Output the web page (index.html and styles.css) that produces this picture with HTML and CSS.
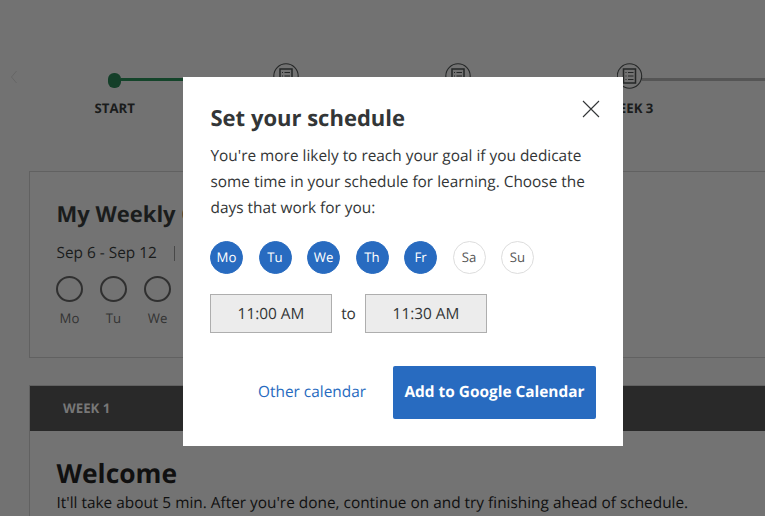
FILE: index.html
```html
<!DOCTYPE html>
<html lang="en">
<head>
<meta charset="utf-8">
<title>Set your schedule</title>
<link rel="stylesheet" href="styles.css">
</head>
<body>
<main class="page">
  <section class="timeline">
    <svg class="prev" width="8" height="14" viewBox="0 0 8 14"><path d="M6.500 1 1.500 7l5 6"/></svg>
    <ol class="weeks">
      <li class="week start"><div class="track"><span class="dot"></span></div><span class="name">START</span></li>
      <li class="week"><div class="track"><svg class="badge" width="26" height="26" viewBox="0 0 26 26"><circle cx="13" cy="13" r="12.200"/><path class="sheet" d="M7 6h12v14H7z"/><path d="M11.500 9.500h5.500M11.500 13h5.500M11.500 16.500h5.500M9 9.500h1M9 13h1M9 16.500h1"/></svg></div></li>
      <li class="week"><div class="track"><svg class="badge" width="26" height="26" viewBox="0 0 26 26"><circle cx="13" cy="13" r="12.200"/><path class="sheet" d="M7 6h12v14H7z"/><path d="M11.500 9.500h5.500M11.500 13h5.500M11.500 16.500h5.500M9 9.500h1M9 13h1M9 16.500h1"/></svg></div></li>
      <li class="week"><div class="track"><svg class="badge" width="26" height="26" viewBox="0 0 26 26"><circle cx="12.500" cy="13" r="12.200"/><path class="sheet" d="M6.500 6h12v14h-12z"/><path d="M11 9.500h5.500M11 13h5.500M11 16.500h5.500M8.500 9.500h1M8.500 13h1M8.500 16.500h1"/></svg></div><span class="name">WEEK 3</span></li>
    </ol>
  </section>
  <section class="card goal">
    <h2>My Weekly Goal</h2>
    <p class="dates"><span>Sep 6 - Sep 12</span><span class="bar"></span></p>
    <div class="progress">
      <div class="day"><span class="ring"></span>Mo</div>
      <div class="day"><span class="ring"></span>Tu</div>
      <div class="day"><span class="ring"></span>We</div>
    </div>
  </section>
  <section class="card module">
    <header>WEEK 1</header>
    <h1>Welcome</h1>
    <p>It'll take about 5 min. After you're done, continue on and try finishing ahead of schedule.</p>
  </section>
</main>
<div class="modal" role="dialog">
  <div class="title-row">
    <h2>Set your schedule</h2>
    <svg class="close" width="18" height="18" viewBox="0 0 18 18"><path d="M1 1l16 16M17 1 1 17"/></svg>
  </div>
  <p class="copy">You're more likely to reach your goal if you dedicate<br>some time in your schedule for learning. Choose the<br>days that work for you:</p>
  <div class="days">
    <span class="pick on">Mo</span><span class="pick on">Tu</span><span class="pick on">We</span><span class="pick on">Th</span><span class="pick on">Fr</span><span class="pick">Sa</span><span class="pick">Su</span>
  </div>
  <div class="times"><span class="time">11:00 AM</span><span class="to">to</span><span class="time">11:30 AM</span></div>
  <div class="actions"><a class="other">Other calendar</a><span class="add">Add to Google Calendar</span></div>
</div>
</body>
</html>
```
FILE: styles.css
```css
* { box-sizing: border-box; }
body {
  margin: 0;
  width: 765px;
  height: 516px;
  overflow: hidden;
  background: #727272;
  font-family: "Open Sans", "Noto Sans", sans-serif;
  font-size: 15.4px;
  color: #1a1c1c;
  text-rendering: geometricPrecision;
}
h1, h2, p, ol { margin: 0; padding: 0; }
.page { height: 516px; overflow: hidden; }

.timeline { display: flex; height: 171px; padding-top: 63px; }
.prev { flex: none; margin: 7px 10px 0 10px; fill: none; stroke: #666; }
.weeks { flex: none; display: grid; grid-template-columns: repeat(4, 171.5px); margin-left: 1px; list-style: none; }
.week { display: flex; flex-direction: column; align-items: center; width: 171.5px; }
.track { display: flex; justify-content: center; width: 100%; height: 34px; background: linear-gradient(#555, #555) 0 15px / 100% 3px no-repeat; }
.week:last-child { width: 230px; margin-right: -60px; align-items: flex-start; }
.week:last-child .track { background-position: 98px 15px; background-size: 140px 3px; justify-content: flex-start; padding-left: 73px; }
.week:last-child .name { width: 172.5px; text-align: center; }
.start .track { background: linear-gradient(#14442a, #14442a) 92px 15px / 80px 3px no-repeat; }
.dot { width: 13px; height: 15px; margin-top: 10px; border-radius: 6px; background: #143f29; }
.badge { fill: none; stroke: #252727; stroke-width: 1.1; }
.sheet { stroke-width: 1.5; }
.name { line-height: 22px; font-size: 13.2px; font-weight: 700; }

.card { margin-left: 29px; width: 900px; border: 1px solid #616161; background: #737373; }
.goal { height: 187px; padding: 26px 26.5px; }
.goal h2 { font-size: 22px; line-height: 32px; }
.dates { display: flex; align-items: center; gap: 17px; margin-top: 11px; line-height: 24px; }
.bar { width: 1px; height: 15px; background: #484848; }
.progress { display: flex; gap: 17px; margin-top: 11px; margin-left: -0.5px; }
.day { display: flex; flex-direction: column; align-items: center; width: 27px; font-size: 13.2px; line-height: 18px; color: #333; }
.ring { width: 27px; height: 26px; margin-bottom: 7px; border: 2px solid #303030; border-radius: 50%; }
.module { height: 200px; margin-top: 27px; }
.module header { height: 45px; padding-left: 33px; background: #292929; color: #777; font-size: 13.2px; font-weight: 700; line-height: 45px; }
.module h1 { margin: 24px 0 0 26.5px; font-size: 26.4px; line-height: 36px; color: #101010; }
.module p { margin: 0 0 0 26.5px; line-height: 24px; color: #101010; }

.modal { position: absolute; left: 183px; top: 77px; width: 440px; height: 369px; padding: 22px 27px 27px; background: #fff; color: #333637; }
.title-row { display: flex; justify-content: space-between; }
.title-row h2 { margin-left: 0.5px; font-size: 22px; line-height: 38px; }
.close { margin: 1px -4px 0 0; fill: none; stroke: #333637; stroke-width: 1.1; }
.copy { margin: 6px -10px 0 0.5px; line-height: 26px; }
.days { display: flex; gap: 15.5px; margin-top: 20px; }
.pick { width: 33px; height: 33px; border: 1px solid #ddd; border-radius: 50%; text-align: center; font-size: 13.2px; line-height: 31px; color: #555; }
.on { border-color: #286bc0; background: #286bc0; color: #fff; }
.times { display: flex; margin-top: 20px; line-height: 37px; text-align: center; }
.time { width: 122px; height: 39px; border: 1px solid #aeaeae; background: #ececec; }
.to { width: 33px; line-height: 39px; }
.actions { display: flex; justify-content: flex-end; gap: 27px; margin-top: 33px; line-height: 51px; }
.other { color: #286bc0; }
.add { width: 203px; height: 53px; border-radius: 2px; background: #286bc0; color: #fff; font-weight: 700; text-align: center; }
```
